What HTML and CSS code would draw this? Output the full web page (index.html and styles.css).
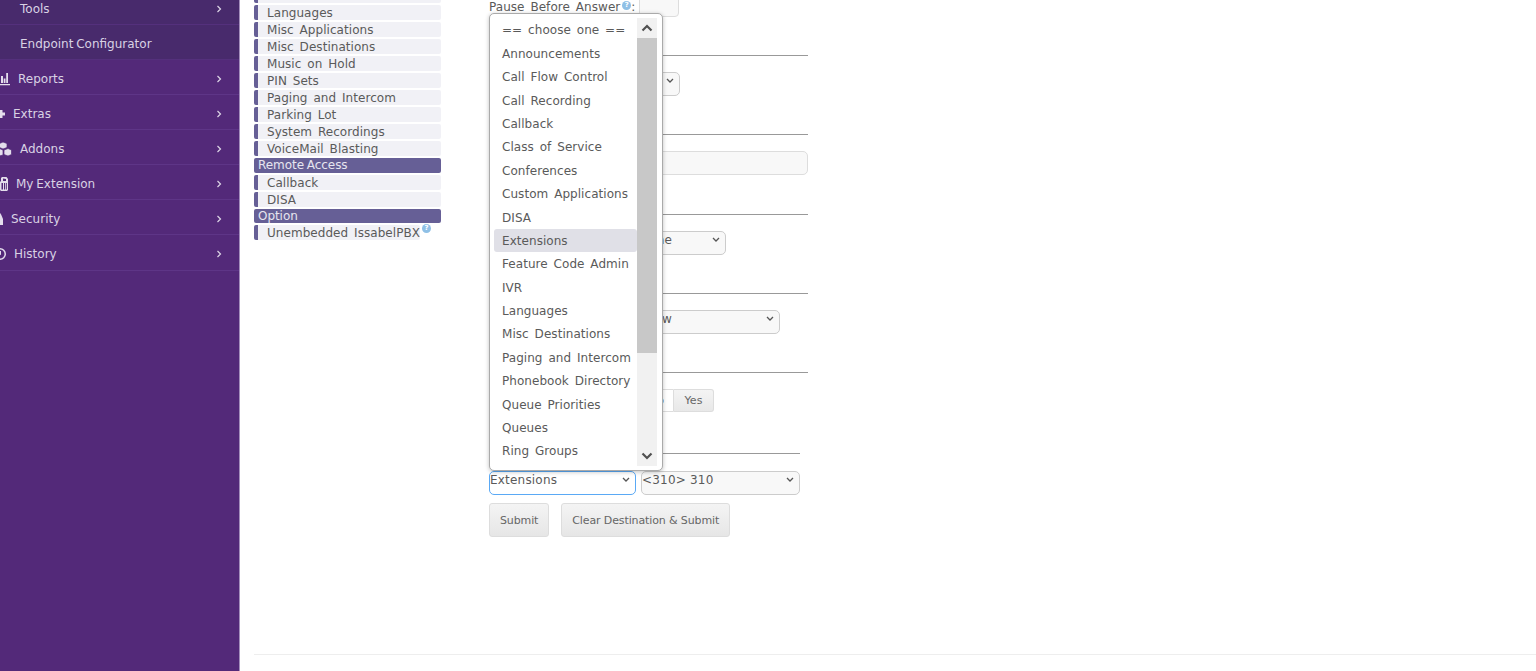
FILE: index.html
```html
<!DOCTYPE html>
<html lang="en">
<head>
<meta charset="utf-8">
<title>Issabel PBX</title>
<link rel="stylesheet" href="styles.css">
</head>
<body>
<div class="shell">
  <aside class="sidebar">
    <div class="nav">
      <a class="nav-row sub">Tools<svg class="chev" viewBox="0 0 6 8"><path d="M1.500 1l3 3-3 3"/></svg></a>
      <a class="nav-row sub">Endpoint Configurator</a>
      <a class="nav-row"><svg class="ico w20" viewBox="0 0 20 14"><path d="M11 4h2v7h-2zM13.700 6.500h1.800V11h-1.800zM16.200 1H18v10h-1.800zM10 12h10v1.200H10z"/></svg>Reports<svg class="chev" viewBox="0 0 6 8"><path d="M1.500 1l3 3-3 3"/></svg></a>
      <a class="nav-row"><svg class="ico w15" viewBox="0 0 15 14"><path d="M9 3h3.500v2.500H15v3h-2.500V11H9z"/></svg>Extras<svg class="chev" viewBox="0 0 6 8"><path d="M1.500 1l3 3-3 3"/></svg></a>
      <a class="nav-row"><svg class="ico w22" viewBox="0 0 22 14"><path class="cube" d="M13 0l4 1.500v4L13 7 9.500 5.500v-4zM9.500 6.500L13 8v5l-3.500 1L6 12.500V8zM18 6.500L21.500 8v4.500L18 14l-4-1.500V8z"/></svg>Addons<svg class="chev" viewBox="0 0 6 8"><path d="M1.500 1l3 3-3 3"/></svg></a>
      <a class="nav-row"><svg class="ico w18" viewBox="0 0 18 14"><path fill-rule="evenodd" d="M12 0h4.500L18 2v11l-1 1h-6l-1-1V5l1-1V1zm1 1.500V4h3V2zM11.500 6v6.500H13V6zm2.500 0v6.500h1.200V6zm2 0v6.500h.8V6z"/></svg>My Extension<svg class="chev" viewBox="0 0 6 8"><path d="M1.500 1l3 3-3 3"/></svg></a>
      <a class="nav-row"><svg class="ico w13" viewBox="0 0 13 14"><path d="M8 13V7l2.500-6L13 7v6z"/></svg>Security<svg class="chev" viewBox="0 0 6 8"><path d="M1.500 1l3 3-3 3"/></svg></a>
      <a class="nav-row last"><svg class="ico w16" viewBox="0 0 16 14"><path fill-rule="evenodd" d="M10 1a6 6 0 1 1 0 12 6 6 0 0 1 0-12zm0 1.500a4.500 4.500 0 1 0 0 9 4.500 4.500 0 0 0 0-9zM9.500 4H11v3.500L9 9 8.500 8l1-1z"/></svg>History<svg class="chev" viewBox="0 0 6 8"><path d="M1.500 1l3 3-3 3"/></svg></a>
    </div>
  </aside>
  <main class="main">
    <div class="columns">
      <nav class="menu">
        <a class="menu-item">IVR</a>
        <a class="menu-item">Languages</a>
        <a class="menu-item">Misc Applications</a>
        <a class="menu-item">Misc Destinations</a>
        <a class="menu-item">Music on Hold</a>
        <a class="menu-item">PIN Sets</a>
        <a class="menu-item">Paging and Intercom</a>
        <a class="menu-item">Parking Lot</a>
        <a class="menu-item">System Recordings</a>
        <a class="menu-item">VoiceMail Blasting</a>
        <div class="menu-head">Remote Access</div>
        <a class="menu-item">Callback</a>
        <a class="menu-item">DISA</a>
        <div class="menu-head">Option</div>
        <div class="menu-last"><a class="menu-item">Unembedded IssabelPBX</a><span class="help">?</span></div>
      </nav>
      <form class="form">
        <div class="pause-row">
          <label class="pause-label">Pause Before Answer<span class="help">?</span>:</label>
          <input class="pause-input" type="text">
        </div>
        <section class="section"><hr><select class="field w-191"><option>Default</option></select></section>
        <section class="section"><hr><input class="field w-full" type="text"></section>
        <section class="section"><hr><select class="field w-237 pad-e"><option>None</option></select></section>
        <section class="section"><hr><select class="field w-291 pad-w"><option>Allow</option></select></section>
        <section class="section toggle-sec"><hr>
          <div class="toggle"><span class="tog tog-no">No</span><span class="tog tog-yes">Yes</span></div>
        </section>
        <section class="section last-sec"><hr class="short">
          <div class="dest">
            <select class="field dest-type"><option>Extensions</option></select>
            <select class="field dest-val"><option>&lt;310&gt; 310</option></select>
          </div>
        </section>
        <div class="actions">
          <button type="button" class="btn">Submit</button>
          <button type="button" class="btn">Clear Destination &amp; Submit</button>
        </div>
        <div class="popup">
          <ul class="popup-list">
            <li>== choose one ==</li>
            <li>Announcements</li>
            <li>Call Flow Control</li>
            <li>Call Recording</li>
            <li>Callback</li>
            <li>Class of Service</li>
            <li>Conferences</li>
            <li>Custom Applications</li>
            <li>DISA</li>
            <li class="active">Extensions</li>
            <li>Feature Code Admin</li>
            <li>IVR</li>
            <li>Languages</li>
            <li>Misc Destinations</li>
            <li>Paging and Intercom</li>
            <li>Phonebook Directory</li>
            <li>Queue Priorities</li>
            <li>Queues</li>
            <li>Ring Groups</li>
          </ul>
          <div class="scrollbar">
            <svg class="arrow" viewBox="0 0 12 8"><path d="M1.500 6.500L6 2l4.500 4.500"/></svg>
            <div class="thumb"></div>
            <div class="track"></div>
            <svg class="arrow" viewBox="0 0 12 8"><path d="M1.500 1.500L6 6l4.500-4.500"/></svg>
          </div>
        </div>
      </form>
    </div>
    <footer class="footer"></footer>
  </main>
</div>
</body>
</html>
```
FILE: styles.css
```css
* { box-sizing: border-box; }
html, body { margin: 0; height: 671px; overflow: hidden; background: #fff; }
body { font-family: "DejaVu Sans", sans-serif; font-size: 12px; word-spacing: 2px; letter-spacing: .05px; color: #5a5a5a; }
.shell { display: flex; height: 671px; overflow: hidden; }

.sidebar { flex: 0 0 240px; background: #532979; border-right: 1px solid #a48fbc; overflow: hidden; }
.nav { margin: -10px 0 0 -10px; }
.nav-row { display: flex; align-items: center; height: 35px; padding-top: 3px; border-bottom: 1px solid #5e3587; color: #d9d2e4; gap: 8px; padding-right: 17px; word-spacing: -1px; letter-spacing: 0; }
.nav-row.last { height: 36px; }
.nav-row.sub { background: #482a6c; padding-left: 30px; border-bottom-color: #54307c; }
.chev { width: 6px; height: 8px; margin-left: auto; fill: none; stroke: #dcd5e6; stroke-width: 1.2; }
.ico { height: 14px; flex: none; fill: #e4deec; }
.cube { stroke: #532979; stroke-width: .7; }
.w20 { width: 20px; } .w15 { width: 15px; } .w22 { width: 22px; } .w18 { width: 18px; } .w13 { width: 13px; } .w16 { width: 16px; }

.main { flex: 1; display: flex; flex-direction: column; min-width: 0; }
.columns { flex: 1; display: flex; align-items: flex-start; padding-left: 14px; gap: 48px; }
.footer { height: 17px; margin-left: 14px; border-top: 1px solid #eee; }

.menu { flex: 0 0 187px; margin-top: -12px; display: flex; flex-direction: column; }
.menu-item { display: block; height: 15px; line-height: 17px; margin-bottom: 2px; background: #f1f1f6; border-left: 4px solid #665f96; border-radius: 2px; padding-left: 9px; white-space: nowrap; }
.menu-head { height: 14.500px; line-height: 14px; margin-bottom: 2px; background: #665f96; border-radius: 2px; color: #e6e5ef; padding-left: 4px; word-spacing: -1px; letter-spacing: -.05px; }
.menu-last { display: flex; align-items: flex-start; }
.menu-last .help { margin-top: -1px; vertical-align: baseline; }
.help { display: inline-block; flex: none; width: 9px; height: 9px; border-radius: 50%; background: #8fc0e6; color: #fff; font: bold 7px/9px "DejaVu Sans", sans-serif; text-align: center; vertical-align: 4px; margin-left: 2px; }

.form { position: relative; flex: 0 0 319px; margin-top: -7px; }
.pause-row { display: flex; height: 24px; align-items: center; margin-bottom: 38px; }
.pause-label { white-space: nowrap; position: relative; top: 2px; }
.pause-input { width: 40px; height: 24px; margin-left: 4px; background: #f8f8f8; border: 1px solid #ddd; border-radius: 4px; }
.section { height: 79.300px; }
.section hr { margin: 0 0 16px; border: 0; border-top: 1px solid #999; }
.section hr.short { width: 311px; margin-bottom: 17px; }
.field { display: block; height: 24px; background-color: #f8f8f8; border: 1px solid #ccc; border-radius: 5px; font: 12px "DejaVu Sans", sans-serif; color: #5a5a5a; padding: 0 0 6px; letter-spacing: .2px; }
select.field { appearance: none; background-image: url("data:image/svg+xml,%3Csvg xmlns='http://www.w3.org/2000/svg' width='8' height='6'%3E%3Cpath d='M1 1l3 3 3-3' fill='none' stroke='%23555' stroke-width='1.300'/%3E%3C/svg%3E"); background-repeat: no-repeat; background-position: right 5px top 5px; background-size: 8px 6px; }
.w-191 { width: 191px; } .w-full { width: 319px; border-color: #ddd; } .w-237 { width: 237px; } .w-291 { width: 291px; }
.pad-e { padding-left: 150px; } .pad-w { padding-left: 149px; }
.toggle { display: flex; height: 23px; width: 225px; font-size: 11px; word-spacing: 0; }
.tog { display: flex; align-items: center; justify-content: center; border: 1px solid #ddd; }
.tog-no { flex: 1; background: #fff; border-radius: 3px 0 0 3px; justify-content: flex-end; padding-right: 9px; }
.tog-yes { width: 40px; background: linear-gradient(#f4f4f4, #e8e8e8); border-left: 0; border-radius: 0 3px 3px 0; color: #666; }
.last-sec { height: auto; padding-top: 1.500px; }
.dest { display: flex; gap: 5px; width: 311px; }
.dest-type { width: 147px; background-color: #fff; border-color: #5aa9f5; }
.dest-val { width: 159px; }
.actions { display: flex; gap: 12px; margin-top: 8px; }
.btn { height: 34px; padding: 2px 10px 0; background: linear-gradient(#f4f4f4, #e6e6e6); border: 1px solid #ddd; border-radius: 3px; font: 11px "DejaVu Sans", sans-serif; letter-spacing: -.12px; color: #666; }

.popup { position: absolute; left: 0; top: 20px; width: 174px; height: 458px; display: flex; background: #fff; border: 1px solid #aaa; border-radius: 5px; box-shadow: 0 1px 4px rgba(0,0,0,.25); padding: 4px; }
.popup-list { list-style: none; margin: 0; padding: .4px 0 0; width: 143px; flex: none; overflow: hidden; }
.popup-list li { height: 23.400px; line-height: 24px; padding-left: 8px; white-space: nowrap; border-radius: 3px; }
.popup-list li.active { background: #e0e0e7; }
.scrollbar { width: 20px; flex: none; display: flex; flex-direction: column; background: #f1f1f1; }
.arrow { width: 20px; height: 20px; padding: 4px; fill: none; stroke: #505050; stroke-width: 2.200; flex: none; }
.thumb { height: 315px; background: #c8c8c8; flex: none; }
.track { flex: 1; }
```
